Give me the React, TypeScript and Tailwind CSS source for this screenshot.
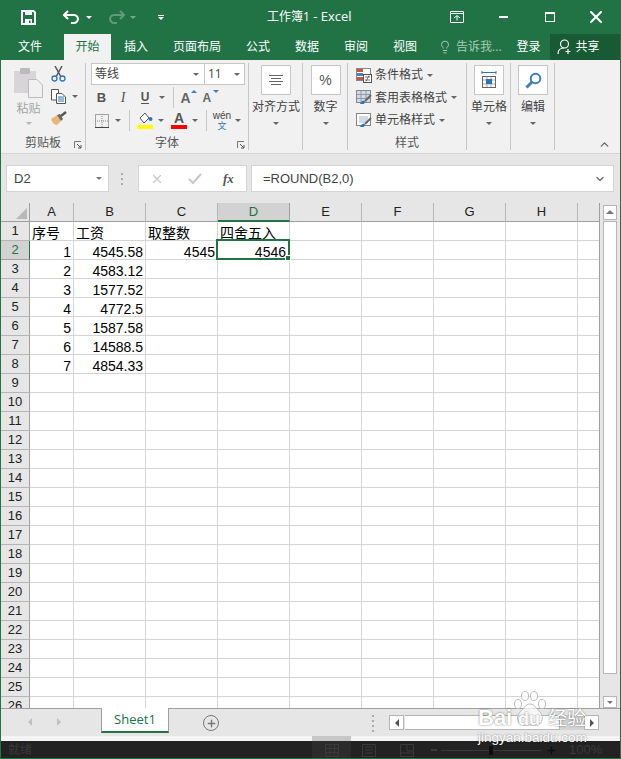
import type { ReactNode } from "react";
import { X, Plus, ChevronDown, ChevronUp, Lightbulb } from "lucide-react";

const ui = "font-['Open_Sans','Noto_Sans_CJK_SC',sans-serif]";
const columns = ["A", "B", "C", "D", "E", "F", "G", "H"];
const rows = Array.from({ length: 26 }, (_, i) => i + 1);

const cellData: Record<string, { text: string; right?: boolean }> = {
  "1-A": { text: "序号" },
  "1-B": { text: "工资" },
  "1-C": { text: "取整数" },
  "1-D": { text: "四舍五入" },
  "2-A": { text: "1", right: true },
  "2-B": { text: "4545.58", right: true },
  "2-C": { text: "4545", right: true },
  "2-D": { text: "4546", right: true },
  "3-A": { text: "2", right: true },
  "3-B": { text: "4583.12", right: true },
  "4-A": { text: "3", right: true },
  "4-B": { text: "1577.52", right: true },
  "5-A": { text: "4", right: true },
  "5-B": { text: "4772.5", right: true },
  "6-A": { text: "5", right: true },
  "6-B": { text: "1587.58", right: true },
  "7-A": { text: "6", right: true },
  "7-B": { text: "14588.5", right: true },
  "8-A": { text: "7", right: true },
  "8-B": { text: "4854.33", right: true },
};

const Caret = ({ className = "border-t-[#666]" }: { className?: string }) => (
  <span className={`block h-0 w-0 border-x-[3px] border-t-[3px] border-x-transparent ${className}`} />
);

const Launcher = () => (
  <svg width="8" height="8" viewBox="0 0 8 8" className="absolute bottom-[1px] right-[3px]">
    <path d="M0.5 7V0.5H7" fill="none" stroke="#777" />
    <path d="M3 3L7 7M7 4V7H4" fill="none" stroke="#555" />
  </svg>
);

const Group = ({ width, label, launcher, children }: { width: string; label?: string; launcher?: boolean; children: ReactNode }) => (
  <div className={`relative flex h-[87px] shrink-0 flex-col border-r border-[#c6c6c6] ${width}`}>
    <div className="h-[72px] shrink-0">{children}</div>
    {label && <div className="flex-1 text-center text-xs leading-[16px] text-[#555]">{label}</div>}
    {launcher && <Launcher />}
  </div>
);

const BoxButton = ({ label, children }: { label: string; children: ReactNode }) => (
  <div className="flex flex-col items-center pl-[1px] pt-[2px]">
    <div className="flex h-[30px] w-[30px] items-center justify-center border border-[#c6c6c6] bg-white">{children}</div>
    <div className="mt-[5px] whitespace-nowrap text-xs leading-[14px] text-[#444]">{label}</div>
    <div className="mt-[8px]"><Caret /></div>
  </div>
);

const TabLabel = ({ children }: { children: ReactNode }) => (
  <span className="shrink-0 text-xs text-white">{children}</span>
);

const Slot = ({ width, children }: { width: string; children?: ReactNode }) => (
  <div className={`flex h-full shrink-0 items-center justify-center ${width}`}>{children}</div>
);

const Sep = () => <span className="h-[21px] w-px bg-[#c6c6c6]" />;

const ClipboardGroup = () => (
  <div className="flex pl-[13px] pt-[5px]">
    <div className="flex w-[29px] flex-col items-center">
      <svg width="29" height="30" viewBox="0 0 29 30">
        <rect x="0" y="3" width="22" height="22" fill="#d8d5d8" />
        <rect x="6" y="0" width="10" height="6" rx="1" fill="#bdbabd" />
        <path d="M14.5 11.5H23L28.5 17V29.5H14.5Z" fill="#f2f1f2" stroke="#bbb" />
      </svg>
      <div className="mt-[3px] whitespace-nowrap text-xs leading-[16px] text-[#a5a5a5]">粘贴</div>
      <div className="mt-[5px]"><Caret className="border-t-[#b5b5b5]" /></div>
    </div>
    <div className="ml-[8px] -mt-[2px] flex flex-col gap-[7px]">
      <svg width="15" height="16" viewBox="0 0 15 16">
        <path d="M4 0L9.5 10M11 0L5.5 10" stroke="#555" strokeWidth="1.5" fill="none" />
        <circle cx="3.5" cy="12.5" r="2.5" fill="none" stroke="#2f75b5" strokeWidth="1.3" />
        <circle cx="11.5" cy="12.5" r="2.5" fill="none" stroke="#2f75b5" strokeWidth="1.3" />
      </svg>
      <div className="flex items-center gap-[6px]">
        <svg width="15" height="15" viewBox="0 0 15 15">
          <path d="M.5.5H7.5V11H.5Z" fill="#fff" stroke="#555" />
          <path d="M5.5 4.5H11L14.5 8V14.5H5.5Z" fill="#fff" stroke="#555" />
          <path d="M7 8H13M7 10H13M7 12H13" stroke="#2f75b5" />
        </svg>
        <Caret />
      </div>
      <svg width="16" height="15" viewBox="0 0 16 15">
        <path d="M0 8L6 4L10 10L6 14C3 14 1 11 0 8Z" fill="#eab676" />
        <path d="M6 4L10 10L12 8L9 3Z" fill="#666" />
        <path d="M10 5L15 1" stroke="#555" strokeWidth="2.4" />
      </svg>
    </div>
  </div>
);

const SizeButton = ({ size, up }: { size: string; up?: boolean }) => (
  <span className={`relative flex h-[17px] w-[17px] items-end font-['Liberation_Sans',sans-serif] font-bold leading-[15px] text-[#666] ${size}`}>
    A
    <span className={`absolute right-[1px] top-[1px] h-0 w-0 border-x-[3px] border-x-transparent ${up ? "border-b-[3px] border-b-[#3f7fbf]" : "border-t-[3px] border-t-[#3f7fbf]"}`} />
  </span>
);

const FontGroup = () => (
  <div className="flex flex-col pl-[5px]">
    <div className="flex h-[22px] w-[154px] border border-[#c6c6c6] bg-white">
      <div className="flex w-[113px] items-center justify-between border-r border-[#c6c6c6] pl-[3px] pr-[5px] text-xs text-[#444]">
        等线<Caret />
      </div>
      <div className="flex flex-1 items-center justify-between pl-[3px] pr-[4px] text-xs text-[#444]">
        11<Caret />
      </div>
    </div>
    <div className="mt-[1px] flex h-[23px] items-center">
      <Slot width="w-[21px]"><span className="font-['Liberation_Sans',sans-serif] text-[13px] font-bold leading-none text-[#555]">B</span></Slot>
      <Slot width="w-[22px]"><span className="font-['Liberation_Serif',serif] text-[14px] italic leading-none text-[#555]">I</span></Slot>
      <Slot width="w-[22px]"><span className="border-b-[1.5px] border-[#555] font-['Liberation_Sans',sans-serif] text-[12px] font-bold leading-[11px] text-[#555]">U</span></Slot>
      <Slot width="w-[12px]"><Caret /></Slot>
      <Slot width="w-[10px]"><Sep /></Slot>
      <Slot width="w-[22px]"><SizeButton size="text-[14px]" up /></Slot>
      <Slot width="w-[22px]"><SizeButton size="text-[12px]" /></Slot>
    </div>
    <div className="flex h-[23px] items-center">
      <Slot width="w-[21px]">
        <svg width="14" height="14" viewBox="0 0 14 14">
          <rect x="0.5" y="0.5" width="13" height="13" fill="none" stroke="#555" strokeDasharray="1 1" />
          <path d="M7 0V14M0 7H14" stroke="#888" strokeDasharray="1 1" />
          <path d="M0 13.5H14" stroke="#444" />
        </svg>
      </Slot>
      <Slot width="w-[12px]"><Caret /></Slot>
      <Slot width="w-[10px]"><Sep /></Slot>
      <Slot width="w-[22px]">
        <svg width="16" height="17" viewBox="0 0 16 17">
          <path d="M3 6L8 1L12 6L7 11Z" fill="#fff" stroke="#555" />
          <circle cx="13.5" cy="7" r="2" fill="#2f75b5" />
          <rect x="0" y="13" width="16" height="4" fill="#ffff00" />
        </svg>
      </Slot>
      <Slot width="w-[10px]"><Caret /></Slot>
      <Slot width="w-[26px]">
        <span className="flex h-[17px] w-[16px] flex-col items-center justify-end font-['Liberation_Sans',sans-serif] text-[14px] font-bold leading-[13px] text-[#555]">
          A
          <span className="h-[4px] w-[16px] bg-[#ff0000]" />
        </span>
      </Slot>
      <Slot width="w-[6px]"><Caret /></Slot>
      <Slot width="w-[16px]"><Sep /></Slot>
      <Slot width="w-[16px]">
        <div className="flex flex-col items-center whitespace-nowrap">
          <span className="font-['Liberation_Sans',sans-serif] text-[10px] leading-[11px] text-[#444]">wén</span>
          <span className="text-[9px] leading-[10px] text-[#2f75b5]">文</span>
        </div>
      </Slot>
      <Slot width="w-[16px]"><Caret /></Slot>
    </div>
  </div>
);

const StyleRow = ({ label, kind }: { label: string; kind: "cond" | "table" | "cell" }) => (
  <div className="flex h-[22.5px] items-center">
    <svg width="16" height="15" viewBox="0 0 16 15" className="shrink-0">
      {kind === "cond" ? (
        <>
          <rect x="0.5" y="0.5" width="14" height="12" fill="#fff" stroke="#888" />
          <rect x="1" y="1" width="6" height="3" fill="#c55a3a" />
          <rect x="1" y="5" width="6" height="3" fill="#4a80bd" />
          <rect x="1" y="9" width="6" height="3" fill="#c55a3a" />
          <rect x="7.5" y="6.5" width="8" height="8" fill="#fff" stroke="#555" />
          <path d="M9 9H14M9 12H14M10 13.5L13 7.5" stroke="#555" strokeWidth="0.8" />
        </>
      ) : kind === "table" ? (
        <>
          <rect x="0.5" y="0.5" width="14" height="12" fill="#cddbeb" stroke="#888" />
          <path d="M5 1V12M10 1V12M1 4.5H14M1 8.5H14" stroke="#999" />
          <path d="M15 5L9 11" stroke="#666" strokeWidth="2" />
          <path d="M4 14C5 11 7 10 9 11L8 14Z" fill="#2f75b5" />
        </>
      ) : (
        <>
          <rect x="0.5" y="0.5" width="14" height="12" fill="#fff" stroke="#888" />
          <rect x="3" y="3" width="9" height="7" fill="#cddbeb" />
          <path d="M15 5L9 11" stroke="#666" strokeWidth="2" />
          <path d="M4 14C5 11 7 10 9 11L8 14Z" fill="#2f75b5" />
        </>
      )}
    </svg>
    <span className="ml-[3px] whitespace-nowrap text-xs text-[#444]">{label}</span>
    <span className="ml-[4px]"><Caret /></span>
  </div>
);

const Ribbon = () => (
  <div className="relative flex h-[94px] items-start border-b border-[#d4d4d4] bg-[#f1f1f1] pt-[3px]">
    <Group width="w-[85px]" label="剪贴板" launcher><ClipboardGroup /></Group>
    <Group width="w-[163px]" label="字体" launcher><FontGroup /></Group>
    <Group width="w-[54px]"><BoxButton label="对齐方式">
      <svg width="14" height="10" viewBox="0 0 14 10"><path d="M0 .5H14M2 3.5H12M0 6.5H14M2 9.5H12" stroke="#666" /></svg>
    </BoxButton></Group>
    <Group width="w-[45px]"><BoxButton label="数字">
      <span className="font-['Liberation_Sans',sans-serif] text-[14px] text-[#555]">%</span>
    </BoxButton></Group>
    <Group width="w-[119px]" label="样式">
      <div className="pl-[8px] pt-[1px]">
        <StyleRow kind="cond" label="条件格式" />
        <StyleRow kind="table" label="套用表格格式" />
        <StyleRow kind="cell" label="单元格样式" />
      </div>
    </Group>
    <Group width="w-[44px]"><BoxButton label="单元格">
      <svg width="16" height="18" viewBox="0 0 16 18">
        <path d="M1 1.5H15M1 0V3M15 0V3" stroke="#2f75b5" />
        <rect x="1.5" y="5.5" width="13" height="11" fill="#fff" stroke="#666" />
        <path d="M6 6V16M10 6V16M2 9H14M2 13H14" stroke="#aaa" />
        <rect x="5" y="8" width="6" height="5" fill="#2f75b5" />
      </svg>
    </BoxButton></Group>
    <Group width="w-[44px]"><BoxButton label="编辑">
      <svg width="17" height="17" viewBox="0 0 17 17">
        <circle cx="10.5" cy="6.5" r="4.8" fill="none" stroke="#3f7fbf" strokeWidth="2" />
        <path d="M7 10L1.5 15.5" stroke="#3f7fbf" strokeWidth="3" />
      </svg>
    </BoxButton></Group>
    <ChevronUp size={13} strokeWidth={2.5} color="#666" className="absolute bottom-[2px] right-[9px]" />
  </div>
);

const FormulaBar = () => (
  <div className="flex h-[49px] items-start bg-[#e6e6e6] pl-[5px] pr-[6px] pt-[11px]">
    <div className="flex h-[27px] w-[103px] items-center justify-between border border-[#d4d4d4] bg-white pl-[7px] pr-[6px] font-['Liberation_Sans',sans-serif] text-[13px] text-[#444]">
      D2<Caret className="border-t-[#777]" />
    </div>
    <div className="ml-[12px] flex w-[3px] flex-col gap-[3px]">
      <span className="mt-[8px] h-[2px] w-[2px] bg-[#aaa]" />
      <span className="h-[2px] w-[2px] bg-[#aaa]" />
      <span className="h-[2px] w-[2px] bg-[#aaa]" />
    </div>
    <div className="ml-[14px] flex h-[27px] w-[109px] items-center border border-[#d4d4d4] bg-white">
      <X size={14} strokeWidth={2} color="#c8c8c8" className="ml-[11px]" />
      <svg width="14" height="12" viewBox="0 0 14 12" className="ml-[24px]"><path d="M1 6L5 10L13 1" fill="none" stroke="#c8c8c8" strokeWidth="2" /></svg>
      <span className="ml-[21px] font-['Liberation_Serif',serif] text-[13px] font-bold italic text-[#555]">fx</span>
    </div>
    <div className="ml-[4px] flex h-[27px] flex-1 items-center justify-between border border-[#d4d4d4] bg-white pl-[11px] pr-[7px] font-['Liberation_Sans',sans-serif] text-[13px] text-[#444]">
      =ROUND(B2,0)
      <ChevronDown size={12} strokeWidth={3} color="#777" />
    </div>
  </div>
);

const Sheet = () => (
  <div className="flex h-[505px] overflow-hidden">
    <div className="h-full w-[598px] shrink-0 overflow-hidden">
      <div className="grid grid-cols-[29px_44px_72px_72px_72px_72px_72px_72px_72px_22px] auto-rows-[19px] font-['Liberation_Sans','Noto_Sans_CJK_SC',sans-serif] text-[14px] text-black">
        <div className="relative border-b border-r border-[#9f9f9f] bg-[#e6e6e6]">
          <span className="absolute bottom-[2px] right-[2px] h-0 w-0 border-b-[11px] border-l-[11px] border-b-[#b8b8b8] border-l-transparent" />
        </div>
        {columns.map((c) => (
          <div key={c} className={`flex items-center justify-center border-b border-r text-[13px] ${c === "D" ? "border-b-2 border-b-[#217346] border-r-[#9f9f9f] bg-[#d2d2d2] text-[#217346]" : "border-b-[#9f9f9f] border-r-[#b5b5b5] bg-[#e6e6e6] text-[#222]"}`}>
            {c}
          </div>
        ))}
        <div className="border-b border-[#9f9f9f] bg-[#e6e6e6]" />
        {rows.map((r) => (
          <div key={r} className="contents">
            <div className={`flex items-center justify-center border-b border-r text-[13px] ${r === 2 ? "border-b-[#9f9f9f] border-r-[#217346] bg-[#d2d2d2] text-[#217346]" : "border-b-[#b5b5b5] border-r-[#9f9f9f] bg-[#e6e6e6] text-[#222]"}`}>
              {r}
            </div>
            {columns.map((c) => {
              const data = cellData[`${r}-${c}`];
              const active = r === 2 && c === "D";
              return (
                <div key={c} className={`relative flex items-end whitespace-nowrap border-b border-r border-[#d4d4d4] bg-white pl-[2px] leading-[14px] ${active ? "pr-[3px]" : "pr-[2px]"} ${data?.right ? "justify-end" : "justify-start"}`}>
                  {data?.text}
                  {active && (
                    <span className="absolute -left-[2px] -top-[2px] z-10 h-[21px] w-[74px] border-2 border-[#217346]">
                      <span className="absolute -bottom-[3px] -right-[3px] h-[6px] w-[6px] border border-white bg-[#217346]" />
                    </span>
                  )}
                </div>
              );
            })}
            <div className="border-b border-[#d4d4d4] bg-white" />
          </div>
        ))}
      </div>
    </div>
    <div className="flex flex-1 flex-col border-l border-[#9f9f9f] bg-[#e6e6e6] pl-[3px] pr-[4px] pt-[2px]">
      <div className="flex h-[15px] w-[14px] items-center justify-center border border-[#b5b5b5] bg-white">
        <span className="h-0 w-0 border-x-[4px] border-b-[4px] border-x-transparent border-b-[#777]" />
      </div>
      <div className="mt-[1px] h-[454px] w-[14px] border border-[#b5b5b5] bg-white" />
      <div className="mt-[22px] flex h-[12px] w-[14px] items-center justify-center border border-[#b5b5b5] bg-white">
        <Caret className="border-t-[#777]" />
      </div>
    </div>
  </div>
);

const TabBar = () => (
  <div className="flex h-[28px] items-start border-t border-[#9f9f9f] bg-[#e6e6e6]">
    <span className="ml-[27px] mt-[9px] h-0 w-0 border-y-[4px] border-r-[4px] border-y-transparent border-r-[#c0c0c0]" />
    <span className="ml-[25px] mt-[9px] h-0 w-0 border-y-[4px] border-l-[4px] border-y-transparent border-l-[#c0c0c0]" />
    <div className="-mt-px ml-[40px] flex h-[25px] w-[68px] items-center justify-center border-x border-b-2 border-x-[#9f9f9f] border-b-[#217346] bg-white font-['Open_Sans',sans-serif] text-[13px] text-[#217346]">
      Sheet1
    </div>
    <div className="ml-[34px] mt-[6px] flex h-[16px] w-[16px] items-center justify-center rounded-full border-[1.5px] border-[#777]">
      <Plus size={11} strokeWidth={3} color="#777" />
    </div>
    <div className="ml-[153px] mt-[6px] flex flex-col gap-[3px]">
      <span className="h-[2px] w-[2px] bg-[#aaa]" />
      <span className="h-[2px] w-[2px] bg-[#aaa]" />
      <span className="h-[2px] w-[2px] bg-[#aaa]" />
      <span className="h-[2px] w-[2px] bg-[#aaa]" />
    </div>
    <div className="ml-[15px] mt-[6px] flex h-[15px] w-[210px] items-stretch">
      <div className="flex w-[15px] items-center justify-center border border-[#b5b5b5] bg-white">
        <span className="h-0 w-0 border-y-[4px] border-r-[4px] border-y-transparent border-r-[#555]" />
      </div>
      <div className="ml-px w-[155px] border-y border-r border-[#b5b5b5] bg-white" />
      <div className="flex-1 bg-[#d4d4d4]" />
      <div className="flex w-[15px] items-center justify-center border border-[#b5b5b5] bg-white">
        <span className="h-0 w-0 border-y-[4px] border-l-[4px] border-y-transparent border-l-[#555]" />
      </div>
    </div>
  </div>
);

const StatusBar = () => (
  <div className="flex h-[18px] items-center bg-[#222222]">
    <span className="ml-[7px] text-xs text-[#3a3a3a]">就绪</span>
    <div className="ml-[280px] flex h-[18px] w-[39px] items-center justify-center bg-[#2b2b2b]">
      <svg width="14" height="13" viewBox="0 0 14 13"><path d="M.5.5H13.5V12.5H.5ZM5 .5V12.5M9.500 .5V12.5M.5 4.500H13.500M.5 8.500H13.500" fill="none" stroke="#3a3a3a" /></svg>
    </div>
    <svg width="14" height="13" viewBox="0 0 14 13" className="ml-[11px]"><path d="M.5.5H13.5V12.5H.5ZM3 3H11M3 6H11M3 9H11" fill="none" stroke="#3a3a3a" /></svg>
    <svg width="14" height="13" viewBox="0 0 14 13" className="ml-[24px]"><path d="M.5.5H13.5V12.5H.5ZM7 .5V7H13.5M.5 9H13.5" fill="none" stroke="#3a3a3a" /></svg>
    <span className="ml-[17px] h-[2px] w-[6px] bg-[#3a3a3a]" />
    <div className="relative ml-[4px] h-px w-[100px] bg-[#3a3a3a]">
      <span className="absolute -top-[4px] left-[48px] h-[9px] w-[4px] bg-[#0d0d0d]" />
    </div>
    <Plus size={11} strokeWidth={3} color="#0d0d0d" className="ml-[5px]" />
    <span className="ml-[12px] font-['Liberation_Sans',sans-serif] text-[13px] text-[#3a3a3a]">100%</span>
  </div>
);

const Watermark = () => (
  <div className="absolute left-[476px] top-[691px] z-20 h-[54px] w-[112px] font-['Liberation_Sans','Noto_Sans_CJK_SC',sans-serif] text-white [text-shadow:0_0_2px_rgba(0,0,0,0.55)]">
    <svg width="34" height="36" viewBox="0 0 34 36" className="absolute left-[36px] top-0">
      <g fill="rgba(255,255,255,0.7)" stroke="#bdbdbd" strokeWidth="1">
        <ellipse cx="5" cy="13" rx="3.500" ry="4.500" />
        <ellipse cx="12" cy="5" rx="3.500" ry="4.500" />
        <ellipse cx="21" cy="5" rx="3.500" ry="4.500" />
        <ellipse cx="29" cy="13" rx="3.500" ry="4.500" />
        <path d="M17 13C12 13 11 18 7 21C3 25 4 34 11 34H23C30 34 31 25 27 21C23 18 22 13 17 13Z" />
      </g>
    </svg>
    <span className="absolute left-[1px] top-[15px] text-[22px] font-bold leading-[24px]">Bai</span>
    <span className="absolute left-[41px] top-[18px] text-[18px] font-bold leading-[20px]">du</span>
    <span className="absolute left-[71px] top-[17px] whitespace-nowrap text-[19px] leading-[22px]">经验</span>
    <span className="absolute left-[1px] top-[39px] whitespace-nowrap text-[13.5px] leading-[15px]">jingyan.baidu.com</span>
  </div>
);

export default function App() {
  return (
    <div className={`relative h-[759px] w-[621px] overflow-hidden border-b border-l border-r border-[#217346] bg-[#f1f1f1] ${ui}`}>
      <div className="relative flex h-[34px] items-center bg-[#217346]">
        <svg width="15" height="15" viewBox="0 0 15 15" className="ml-[20px]">
          <path d="M1 1H12.500L14 2.500V14H1Z" fill="none" stroke="#fff" strokeWidth="2" />
          <rect x="4" y="1" width="7" height="4" fill="#fff" />
          <rect x="4" y="9" width="7" height="5" fill="#fff" />
          <rect x="8" y="10.500" width="1.500" height="2.500" fill="#217346" />
        </svg>
        <svg width="18" height="15" viewBox="0 0 18 15" className="ml-[27px]"><path d="M5 1L1 5L5 9M1 5H11C14 5 15 8 15 9C15 11 13 13 11 13H8" fill="none" stroke="#fff" strokeWidth="2" /></svg>
        <span className="ml-[5px]"><Caret className="border-t-white" /></span>
        <svg width="18" height="15" viewBox="0 0 18 15" className="ml-[15px] -scale-x-100 opacity-40"><path d="M5 1L1 5L5 9M1 5H11C14 5 15 8 15 9C15 11 13 13 11 13H8" fill="none" stroke="#c0d8c8" strokeWidth="2" /></svg>
        <span className="ml-[5px] opacity-40"><Caret className="border-t-white" /></span>
        <div className="ml-[22px] flex flex-col items-center gap-[1px]">
          <span className="h-px w-[6px] bg-white" />
          <Caret className="border-t-white" />
        </div>
        <span className="ml-[103px] whitespace-nowrap text-xs text-white">工作簿1<span className="text-[13px]"> - Excel</span></span>
        <svg width="14" height="12" viewBox="0 0 14 12" className="ml-[98px]"><path d="M.5.5H13.5V11.5H.5ZM.5 2.5H13.5M4 7L7 4.5L10 7M7 5V9.5" fill="none" stroke="#fff" /></svg>
        <span className="ml-[35px] h-[2px] w-[9px] bg-white" />
        <span className="ml-[37px] h-[10px] w-[10px] border border-t-2 border-white" />
        <X size={20} strokeWidth={2.4} color="#fff" className="ml-[31px]" />
      </div>

      <div className="flex h-[26px] items-stretch bg-[#217346]">
        <div className="flex w-[63px] items-center pl-[17px]"><TabLabel>文件</TabLabel></div>
        <div className="flex w-[47px] items-center justify-center bg-[#f1f1f1] text-xs text-[#217346]">开始</div>
        <div className="flex items-center gap-[25px] pl-[13px]">
          <TabLabel>插入</TabLabel>
          <TabLabel>页面布局</TabLabel>
          <TabLabel>公式</TabLabel>
          <TabLabel>数据</TabLabel>
          <TabLabel>审阅</TabLabel>
          <TabLabel>视图</TabLabel>
        </div>
        <div className="ml-[21px] flex items-center">
          <Lightbulb size={14} strokeWidth={1.5} color="#b8d4c2" />
          <span className="ml-[4px] whitespace-nowrap text-xs text-[#a9cbb5]">告诉我...</span>
        </div>
        <span className="ml-[15px] flex items-center text-xs text-white">登录</span>
        <div className="ml-[9px] flex flex-1 items-center bg-[#185a33] pl-[7px]">
          <svg width="15" height="16" viewBox="0 0 15 16">
            <circle cx="7.500" cy="5" r="4" fill="none" stroke="#fff" strokeWidth="1.200" />
            <path d="M1 15C1 11 3.500 9 7 9" fill="none" stroke="#fff" strokeWidth="1.200" />
            <path d="M11 10V15M8.500 12.500H13.500" stroke="#fff" strokeWidth="1.200" />
          </svg>
          <span className="ml-[4px] text-xs text-white">共享</span>
        </div>
      </div>

      <Ribbon />
      <FormulaBar />
      <Sheet />
      <TabBar />
      <div className="flex h-[5px] bg-[#f4f4f4]">
        <span className="ml-[311px] w-[39px] bg-[#c6c6c6]" />
      </div>
      <StatusBar />
      <Watermark />
    </div>
  );
}
